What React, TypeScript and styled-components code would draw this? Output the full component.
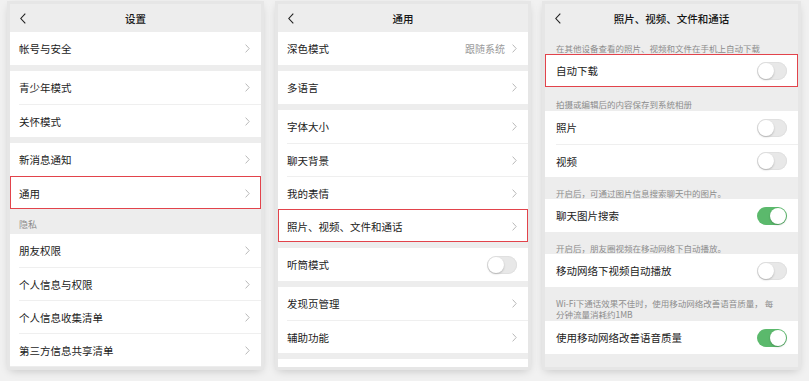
import React from "react";
import styled, { createGlobalStyle } from "styled-components";

const Global = createGlobalStyle`
  html, body { margin: 0; padding: 0; background: #f1f1f1; }
  body { font-family: "Noto Sans CJK SC", "Noto Sans", sans-serif; }
  * { box-sizing: border-box; }
`;

const Stage = styled.div`
  display: flex;
  align-items: flex-start;
  gap: 17px;
  padding: 4px 0 0 10px;
  width: 809px;
  height: 381px;
  overflow: hidden;
`;

const Panel = styled.div<{ $w: number }>`
  width: ${(p) => p.$w}px;
  height: 363px;
  flex-shrink: 0;
  background: #ededed;
  overflow: hidden;
  display: flex;
  flex-direction: column;
  box-shadow: 0 0 0 3px #e6e6e6, 0 3px 9px rgba(0, 0, 0, 0.22);
`;

const Header = styled.div`
  height: 28px;
  flex-shrink: 0;
  display: grid;
  grid-template-columns: 34px 1fr 34px;
  align-items: center;
  font-size: 10.5px;
  font-weight: 500;
  color: #161616;
`;

const BackBtn = styled.div`
  padding-left: 10px;
  display: flex;
  align-items: center;
`;

const Title = styled.div`
  text-align: center;
  white-space: nowrap;
`;

const Group = styled.div<{ $mt?: number }>`
  background: #fff;
  margin-top: ${(p) => p.$mt ?? 0}px;
  flex-shrink: 0;
`;

const BlankGroup = styled.div<{ $mt?: number }>`
  background: #fff;
  margin-top: ${(p) => p.$mt ?? 0}px;
  height: 33px;
  flex-shrink: 0;
`;

const Row = styled.div<{ $pl: number; $hl?: boolean }>`
  height: 33px;
  display: flex;
  padding-left: ${(p) => p.$pl}px;
  position: relative;
  background: #fff;
  ${(p) =>
    p.$hl
      ? `outline: 1px solid #e2434b; outline-offset: -1px; z-index: 1;`
      : ""}
`;

const RowBody = styled.div<{ $sep?: boolean }>`
  flex: 1;
  display: flex;
  align-items: center;
  padding-right: 11px;
  border-top: ${(p) => (p.$sep ? "1px solid #efefef" : "none")};
`;

const Label = styled.span`
  flex: 1;
  font-size: 10.5px;
  color: #1b1b1b;
  white-space: nowrap;
`;

const Value = styled.span`
  font-size: 10px;
  color: #9a9a9a;
  margin-right: 7px;
`;

const Section = styled.div<{ $pt?: number; $pb?: number; $pl: number; $fs?: number; $lh?: number }>`
  padding: ${(p) => p.$pt ?? 11}px 11px ${(p) => p.$pb ?? 1}px ${(p) => p.$pl}px;
  font-size: ${(p) => p.$fs ?? 8.5}px;
  line-height: ${(p) => p.$lh ?? 10}px;
  color: #8c8c8c;
  white-space: nowrap;
  flex-shrink: 0;
`;

const Track = styled.div<{ $on?: boolean }>`
  width: 30px;
  height: 18px;
  border-radius: 9px;
  background: ${(p) => (p.$on ? "#5bb96c" : "#e8e8e8")};
  box-shadow: ${(p) => (p.$on ? "none" : "inset 0 0 0 1px #e0e0e0")};
  display: flex;
  align-items: center;
  justify-content: ${(p) => (p.$on ? "flex-end" : "flex-start")};
  padding: 1px;
  flex-shrink: 0;
`;

const Knob = styled.div`
  width: 16px;
  height: 16px;
  border-radius: 50%;
  background: #fff;
  box-shadow: 0 1px 2px rgba(0, 0, 0, 0.22);
`;

const Chevron = () => (
  <svg width="5" height="9" viewBox="0 0 5 9">
    <polyline points="0.6,0.6 4.2,4.5 0.6,8.4" fill="none" stroke="#b9b9b9" strokeWidth="1" />
  </svg>
);

const Back = () => (
  <svg width="6" height="11" viewBox="0 0 6 11">
    <polyline points="5.3,0.6 0.8,5.5 5.3,10.4" fill="none" stroke="#222" strokeWidth="1.1" />
  </svg>
);

const Toggle = ({ on }: { on?: boolean }) => (
  <Track $on={on}>
    <Knob />
  </Track>
);

type Item = { label: string; value?: string; toggle?: "on" | "off"; hl?: boolean };

const Rows = ({ items, pl, mt }: { items: Item[]; pl: number; mt?: number }) => (
  <Group $mt={mt}>
    {items.map((it, i) => (
      <Row key={it.label} $pl={pl} $hl={it.hl}>
        <RowBody $sep={i > 0}>
          <Label>{it.label}</Label>
          {it.value && <Value>{it.value}</Value>}
          {it.toggle ? <Toggle on={it.toggle === "on"} /> : <Chevron />}
        </RowBody>
      </Row>
    ))}
  </Group>
);

const PanelHeader = ({ title }: { title: string }) => (
  <Header>
    <BackBtn>
      <Back />
    </BackBtn>
    <Title>{title}</Title>
    <span />
  </Header>
);

export default function App() {
  return (
    <>
      <Global />
      <Stage>
        <Panel $w={251}>
          <PanelHeader title="设置" />
          <Rows pl={9} items={[{ label: "帐号与安全" }]} />
          <Rows pl={9} mt={6} items={[{ label: "青少年模式" }, { label: "关怀模式" }]} />
          <Rows pl={9} mt={6} items={[{ label: "新消息通知" }, { label: "通用", hl: true }]} />
          <Section $pl={9} $pt={11} $pb={4} $fs={9}>隐私</Section>
          <Rows
            pl={9}
            items={[
              { label: "朋友权限" },
              { label: "个人信息与权限" },
              { label: "个人信息收集清单" },
              { label: "第三方信息共享清单" },
            ]}
          />
        </Panel>

        <Panel $w={250}>
          <PanelHeader title="通用" />
          <Rows pl={9} items={[{ label: "深色模式", value: "跟随系统" }]} />
          <Rows pl={9} mt={6} items={[{ label: "多语言" }]} />
          <Rows
            pl={9}
            mt={6}
            items={[
              { label: "字体大小" },
              { label: "聊天背景" },
              { label: "我的表情" },
              { label: "照片、视频、文件和通话", hl: true },
            ]}
          />
          <Rows pl={9} mt={6} items={[{ label: "听筒模式", toggle: "off" }]} />
          <Rows pl={9} mt={6} items={[{ label: "发现页管理" }, { label: "辅助功能" }]} />
          <BlankGroup $mt={6} />
        </Panel>

        <Panel $w={253}>
          <PanelHeader title="照片、视频、文件和通话" />
          <Section $pl={11}>在其他设备查看的照片、视频和文件在手机上自动下载</Section>
          <Rows pl={11} items={[{ label: "自动下载", toggle: "off", hl: true }]} />
          <Section $pl={11} $pt={12} $pb={2}>拍摄或编辑后的内容保存到系统相册</Section>
          <Rows
            pl={11}
            items={[
              { label: "照片", toggle: "off" },
              { label: "视频", toggle: "off" },
            ]}
          />
          <Section $pl={11}>开启后，可通过图片信息搜索聊天中的图片。</Section>
          <Rows pl={11} items={[{ label: "聊天图片搜索", toggle: "on" }]} />
          <Section $pl={11}>开启后，朋友圈视频在移动网络下自动播放。</Section>
          <Rows pl={11} items={[{ label: "移动网络下视频自动播放", toggle: "off" }]} />
          <Section $pl={11} $pt={11} $pb={2} $lh={10.5}>
            Wi-Fi下通话效果不佳时，使用移动网络改善语音质量， 每
            <br />
            分钟流量消耗约1MB
          </Section>
          <Rows pl={11} items={[{ label: "使用移动网络改善语音质量", toggle: "on" }]} />
        </Panel>
      </Stage>
    </>
  );
}
